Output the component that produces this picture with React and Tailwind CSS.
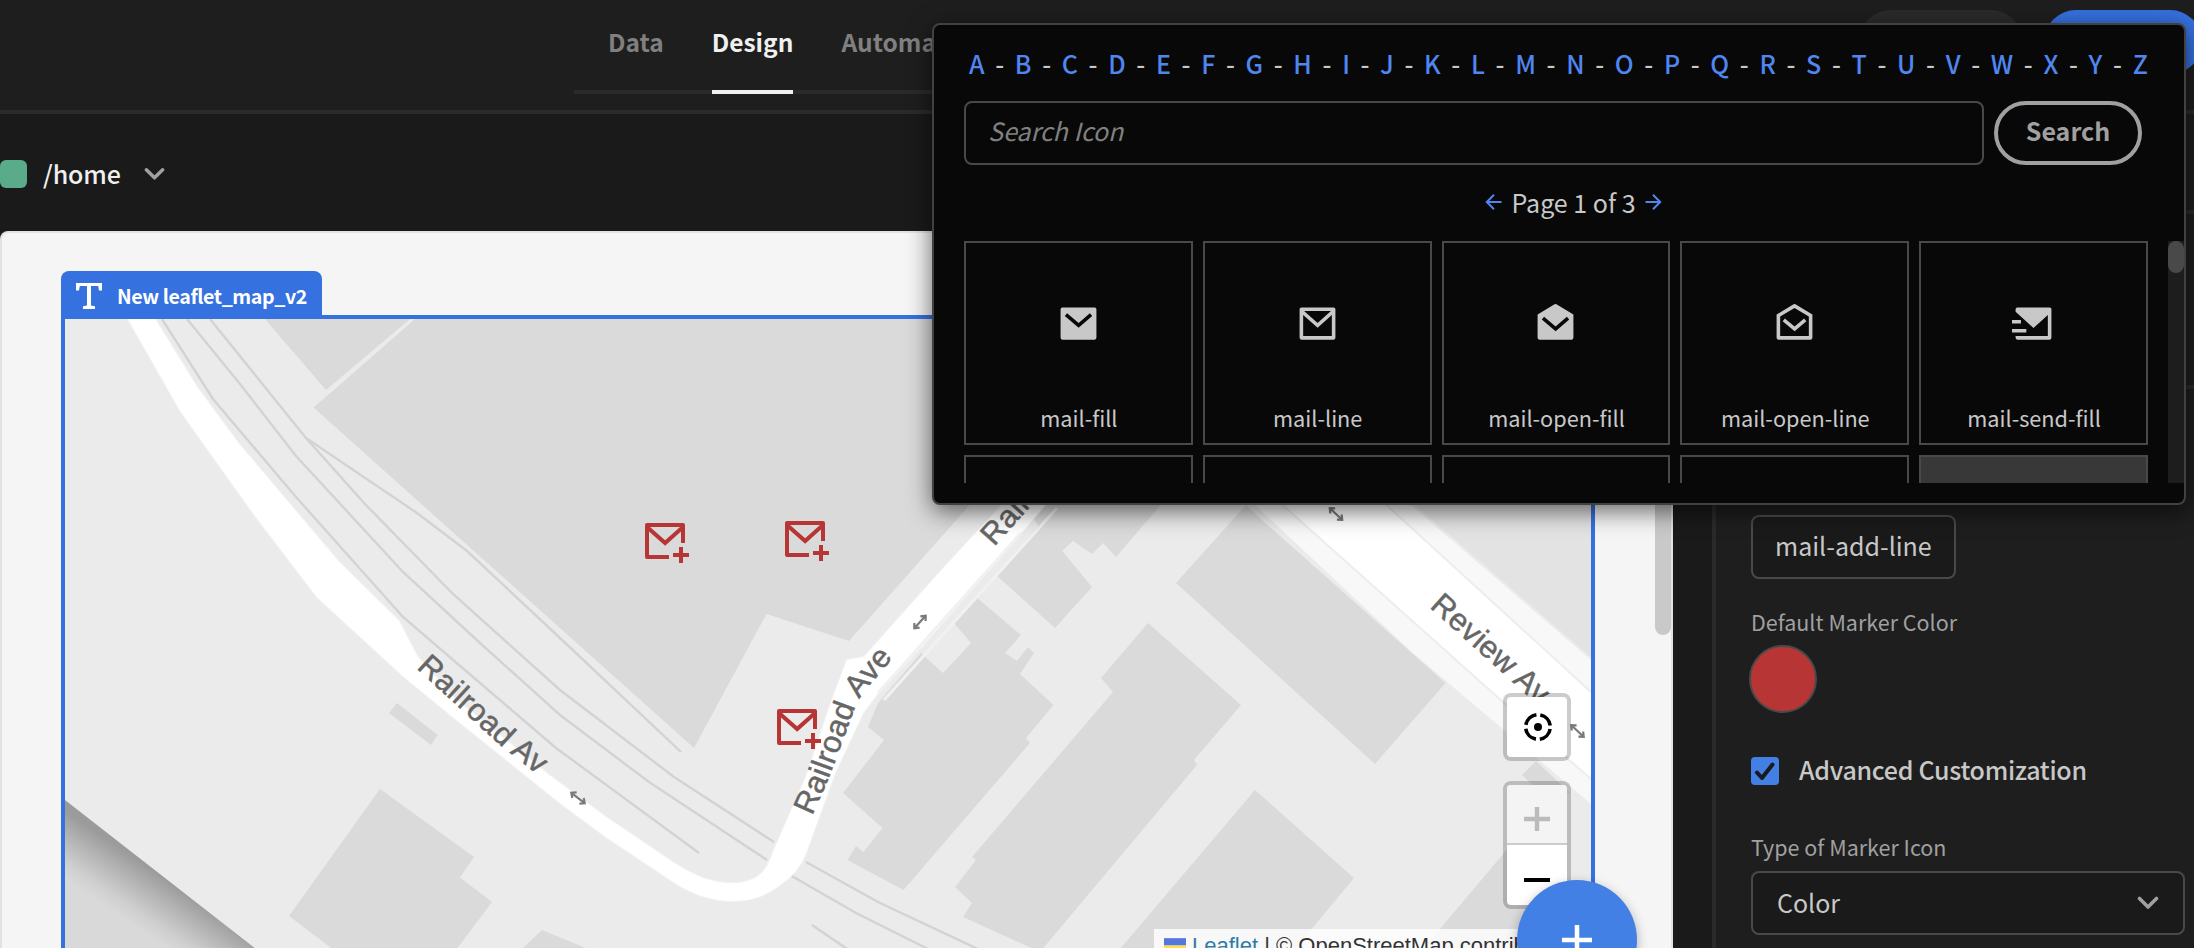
import React from "react";

const LETTERS = "ABCDEFGHIJKLMNOPQRSTUVWXYZ".split("");

const ICON_PATHS = {
  "mail-fill":
    "M3 3h18a1 1 0 0 1 1 1v16a1 1 0 0 1-1 1H3a1 1 0 0 1-1-1V4a1 1 0 0 1 1-1zm9.06 8.683L5.648 6.238 4.353 7.762l7.72 6.555 7.581-6.56-1.308-1.513-6.285 5.439z",
  "mail-line":
    "M3 3h18a1 1 0 0 1 1 1v16a1 1 0 0 1-1 1H3a1 1 0 0 1-1-1V4a1 1 0 0 1 1-1zm17 4.238l-7.928 7.1L4 7.216V19h16V7.238zM4.511 5l7.55 6.662L19.502 5H4.511z",
  "mail-open-fill":
    "M2.243 6.854L11.49 1.31a1 1 0 0 1 1.029 0l9.238 5.545a.5.5 0 0 1 .243.429V20a1 1 0 0 1-1 1H3a1 1 0 0 1-1-1V7.283a.5.5 0 0 1 .243-.429zm16.103 1.39l-6.285 5.439-6.414-5.445-1.294 1.524 7.72 6.555 7.581-6.56-1.308-1.513z",
  "mail-open-line":
    "M2.243 6.854L11.49 1.31a1 1 0 0 1 1.029 0l9.238 5.545a.5.5 0 0 1 .243.429V20a1 1 0 0 1-1 1H3a1 1 0 0 1-1-1V7.283a.5.5 0 0 1 .243-.429zM4 8.133V19h16V8.132l-7.996-4.8L4 8.132zm8.06 5.565l5.296-4.463 1.288 1.53-6.57 5.537-6.71-5.53 1.272-1.544 5.424 4.47z",
  "mail-send-fill":
    "M2 5.5V3.993A1 1 0 0 1 2.992 3h18.016c.548 0 .992.445.992.993v16.014a1 1 0 0 1-.992.993H2.992A.993.993 0 0 1 2 20.007V19h18V7.3l-8 7.2-10-9zM0 10h5v2H0v-2zm0 5h8v2H0v-2z",
  "mail-add-line":
    "M22 13h-2V7.238l-7.928 7.1L4 7.216V19h10v2H3a1 1 0 0 1-1-1V4a1 1 0 0 1 1-1h18a1 1 0 0 1 1 1v9zM4.511 5l7.55 6.662L19.502 5H4.511zM21 15v3h3v2h-3v3h-2v-3h-3v-2h3v-3h2z",
};

const PICKER_ICONS = ["mail-fill", "mail-line", "mail-open-fill", "mail-open-line", "mail-send-fill"];

function RemixIcon({ name, className }) {
  return (
    <svg viewBox="0 0 24 24" fill="currentColor" className={className}>
      <path d={ICON_PATHS[name]} />
    </svg>
  );
}

function Chevron({ className }) {
  return (
    <svg viewBox="0 0 22 14" fill="none" stroke="currentColor" strokeWidth="3.6" strokeLinecap="round" strokeLinejoin="round" className={className}>
      <path d="M2.5 2.5 11 11l8.500-8.500" />
    </svg>
  );
}

function Arrow({ className }) {
  return (
    <svg viewBox="0 0 18 18" fill="none" stroke="currentColor" strokeWidth="2" className={className}>
      <path d="M1.500 9h15M9 1.800 1.800 9 9 16.200" />
    </svg>
  );
}

function RoadArrow({ x, y, angle }) {
  return (
    <path
      transform={`translate(${x} ${y}) rotate(${angle})`}
      d="M-8 0H8M-4.500 -3.500-8.500 0-4.500 3.500M4.500 -3.500 8.500 0 4.500 3.500"
      fill="none"
      stroke="#7a7a7a"
      strokeWidth="2.200"
    />
  );
}

function MapTiles() {
  return (
    <svg viewBox="65 319 1526 629" className="block h-[629px] w-[1526px]">
      <defs>
        <linearGradient id="shore" gradientUnits="userSpaceOnUse" x1="160" y1="875" x2="128" y2="922">
          <stop offset="0" stopColor="#9b9b9b" />
          <stop offset="0.35" stopColor="#b4b4b4" />
          <stop offset="0.75" stopColor="#cfcfcf" />
          <stop offset="1" stopColor="#d9d9d9" />
        </linearGradient>
        <path id="label-a" d="M416 668 L501 746 L580 808" />
        <path id="label-b" d="M812 816 L829 778 L853 713 Q859 697 870 685 L905 643" />
        <path id="label-c" d="M994 547 L1098 431" />
        <path id="label-d" d="M1429 607 L1568 732" />
      </defs>
      <rect x="65" y="319" width="1526" height="629" fill="#ebebeb" />
      <g fill="#dadada">
        <path d="M265 319 326 390 410 319z" />
        <path d="M415 319 335 389 313.500 407.500 694 748 766.500 614 849 641 967 508 1130 319z" />
        <path d="M380 789 474 857 460 877.500 492 902 456 950 334 950 289 916z" />
        <path d="M397 703 437.500 735 431 745 389 713z" />
        <path d="M542 930 588 949 522 949z" />
        <path d="M976 597 1021 635 1005 653 1017 661 1028 647 1034 653 1020 674 1053.500 705 1026 738 1030 743 903.500 890 847.500 860 856 846 863.500 852 882.500 828 843 793 884 740 868 727 878 703 921 653 943 673 971 643 953 622z" />
        <path d="M996 575 1040 524 1092 587 1055 628z" />
        <path d="M1022 500 1165 500 1116 557 1103 543 1092 554 1073 541 1062 551 1046 538z" />
        <path d="M1148 623 1241 705 1194 760 1197 765 1040 952 963 917 972 903 955 887 976 860 972 857 1113 692 1101 678z" />
        <path d="M1246 505 1176 583 1375 764 1445.500 683 1262 520z" />
        <path d="M1255 790 1354 878 1295 949 1120 949z" />
        <path d="M1515 840 1562 880 1502 949 1423 949z" />
        <path d="M1536 761 1522 775 1541 793 1570 793z" />
      </g>
      <path d="M65 800 256 949 65 949z" fill="url(#shore)" />
      <g fill="none" stroke="#d3d3d3" strokeWidth="2.400">
        <path d="M162 319 213 399 296 497 403 617 480 683 556 748 699 853" />
        <path d="M187 319 240 384 296 456 403 572 480 643 560 715 649 782 767 860M790 875 856 913 930 950" />
        <path d="M210 319 306 438 364 503 453 594 560 690 674 777 774 842M806 862 878 902 980 950" />
        <path d="M306 438 417 513 467 551 560 638 681 752" />
        <path d="M812 925 850 951" />
      </g>
      <path
        d="M128 319 181 412 253 513 317 597 403 676 453 717 560 803 606 837 678 885Q705 901 733 901 760 901 780 885 799 872 806 853L835 773 863 713 878 693 921 647 1021 533 1130 405 1090 405 999 508 939 573 864 657 847 660 833 697 806 777 774 850Q767 873 753 879 742 884 731 883 717 883 703 878 690 873 674 863L606 817 549 775 453 697 417 656 399 621 339 562 239 444 197 387 155 319z"
        fill="#fff"
        stroke="#f3f3f3"
        strokeWidth="2"
        paintOrder="stroke"
      />
      <path d="M1021 533 878 693M1057 508 884 700" fill="none" stroke="#f1f1f1" strokeWidth="3" />
      <path d="M1409 500 1591 500 1591 657z" fill="#e3e3e3" />
      <path d="M1250 500 1405 500 1591 660 1591 804 1413 653z" fill="#f8f8f8" />
      <path d="M1277 500 1381 500 1591 692 1591 779 1503 702z" fill="#fff" />
      <g fill="none" stroke="#ededed" strokeWidth="2">
        <path d="M1277 500 1503 702 1591 779" />
        <path d="M1381 500 1591 692" />
      </g>
      <RoadArrow x={578} y={798} angle={38} />
      <RoadArrow x={920} y={622} angle={-48} />
      <RoadArrow x={1336} y={514} angle={43} />
      <RoadArrow x={1577.5} y={731} angle={43} />
      <g fill="#666" stroke="#666" strokeWidth="0.500" fontFamily="Liberation Sans, Arial, sans-serif" fontSize="31" letterSpacing="0.400">
        <text><textPath href="#label-a">Railroad Av</textPath></text>
        <text><textPath href="#label-b">Railroad Ave</textPath></text>
        <text><textPath href="#label-c">Rail</textPath></text>
        <text><textPath href="#label-d">Review Av</textPath></text>
      </g>
    </svg>
  );
}

function MapWidget() {
  return (
    <div className="relative h-[633px] w-[1534px] overflow-hidden border-4 border-b-0 border-[#3671e0]">
      <MapTiles />
      <RemixIcon name="mail-add-line" className="absolute left-[576px] top-[198px] size-12 text-[#b83535]" />
      <RemixIcon name="mail-add-line" className="absolute left-[716px] top-[196px] size-12 text-[#b83535]" />
      <RemixIcon name="mail-add-line" className="absolute left-[708px] top-[384px] size-12 text-[#b83535]" />
      <div className="absolute left-[1438px] top-[374px] flex size-[68px] items-center justify-center rounded-lg border-4 border-black/20 bg-white bg-clip-padding">
        <svg viewBox="0 0 30 30" className="ml-[2px] size-[30px]">
          <circle cx="15" cy="15" r="12.300" fill="none" stroke="#000" strokeWidth="3.600" strokeDasharray="15.320 4" strokeDashoffset="-2" />
          <circle cx="15" cy="15" r="4" />
        </svg>
      </div>
      <div className="absolute left-[1438px] top-[462px] flex h-32 w-[68px] flex-col overflow-hidden rounded-lg border-4 border-black/20 bg-white bg-clip-padding">
        <div className="flex h-[60px] items-center justify-center border-b-2 border-[#ccc] bg-[#f4f4f4] pt-[9px] text-[#bbb]">
          <svg viewBox="0 0 26 26" className="size-[26px]" stroke="currentColor" strokeWidth="4.400"><path d="M0 13h26M13 1v24" /></svg>
        </div>
        <div className="flex h-[60px] items-center justify-center pt-[9px] text-black">
          <svg viewBox="0 0 26 26" className="size-[26px]" stroke="currentColor" strokeWidth="4"><path d="M0 13h26" /></svg>
        </div>
      </div>
      <div className="absolute left-[1089px] top-[610px] flex h-8 w-[437px] items-center whitespace-nowrap bg-white/80 pl-[10px] font-['Liberation_Sans',Arial,sans-serif] text-[22px] text-[#333]">
        <svg viewBox="0 0 12 8" className="mr-[6px] mt-px h-[15px] w-[22px]">
          <path fill="#5577dd" d="M0 0h12v4H0z" />
          <path fill="#ffdd44" d="M0 4h12v4H0z" />
        </svg>
        <span className="text-[#2f7ba8]">Leaflet</span>
        <span className="whitespace-pre"> | © OpenStreetMap contributors</span>
      </div>
    </div>
  );
}

function IconPicker() {
  return (
    <div className="absolute left-[932px] top-[23px] h-[482px] w-[1254px] overflow-hidden rounded-lg border-2 border-[#414141] bg-[#080808] shadow-[0_6px_24px_rgba(0,0,0,0.6)]">
      <div className="flex h-[76px] items-center justify-between pl-[35px] pr-[36px] text-[25px] font-medium leading-none">
        {LETTERS.map((l, i) => (
          <React.Fragment key={l}>
            {i > 0 && <span className="text-[#c8c8c8]">-</span>}
            <span className="text-[#4f86f0]">{l}</span>
          </React.Fragment>
        ))}
      </div>
      <div className="flex gap-[10px] pl-[30px]">
        <div className="flex h-16 w-[1020px] items-center rounded-lg border-2 border-[#494949] pb-[4px] pl-[22px] text-[25px] italic text-[#808080]">Search Icon</div>
        <div className="flex h-16 w-[148px] items-center justify-center rounded-full border-4 border-[#a0a0a0] pb-[4px] text-[25px] font-bold text-[#a0a0a0]">Search</div>
      </div>
      <div className="flex h-[76px] items-center justify-center gap-[8px] pl-[29px] text-[25px] text-[#c8c8c8]">
        <Arrow className="mb-[3px] size-[18px] text-[#4f86f0]" />
        <span>Page 1 of 3</span>
        <Arrow className="mb-[3px] size-[18px] rotate-180 text-[#4f86f0]" />
      </div>
      <div className="flex h-[242px] justify-between overflow-hidden pl-[30px]">
        <div className="grid grid-cols-[repeat(5,228.8px)] content-start gap-[10px]">
          {PICKER_ICONS.map((name) => (
            <div key={name} className="flex h-[204px] flex-col items-center border-2 border-[#494949] pt-[59px] text-[#c8c8c8]">
              <RemixIcon name={name} className="size-[43px]" />
              <span className="mt-[53px] pl-px text-[21.700px] leading-[40px]">{name}</span>
            </div>
          ))}
          {PICKER_ICONS.map((name, i) => (
            <div key={name} className={i === 4 ? "h-[204px] border-2 border-[#494949] bg-[#383838]" : "h-[204px] border-2 border-[#494949]"} />
          ))}
        </div>
        <div className="w-4 bg-[#1d1d1d]">
          <div className="h-8 rounded-full bg-[#494949]" />
        </div>
      </div>
    </div>
  );
}

function SettingsPanel() {
  return (
    <aside className="flex h-[834px] w-[482px] flex-col border-l-4 border-[#2a2a2a] bg-[#1e1e1e] text-[#c8c8c8]">
      <div className="h-[100px] border-b-4 border-[#2a2a2a]" />
      <div className="h-[175px] border-b-4 border-[#2a2a2a]" />
      <div className="flex flex-col items-start pl-[35px] pt-[126px]">
        <div className="flex h-16 w-[205px] items-center rounded-lg border-2 border-[#494949] bg-[#1a1a1a] pb-[3px] pl-[22px] text-[25px]">mail-add-line</div>
        <div className="mt-[23px] flex h-10 items-center text-[21.500px] text-[#a0a0a0]">Default Marker Color</div>
        <div className="-ml-[2px] mt-[3px] size-[68px] rounded-full border-2 border-[#494949] bg-[#b83535]" />
        <div className="mt-[38px] flex h-10 items-center gap-5">
          <div className="flex size-7 items-center justify-center rounded bg-[#4380e5]">
            <svg viewBox="0 0 22 22" className="size-[22px]" fill="none" stroke="#1a1a1a" strokeWidth="4" strokeLinecap="round" strokeLinejoin="round"><path d="M3 12.500 8 18 18.500 4.500" /></svg>
          </div>
          <span className="pb-[2px] text-[25px] font-medium tracking-[-0.3px]">Advanced Customization</span>
        </div>
        <div className="mt-[36px] flex h-10 items-center text-[21.500px] text-[#a0a0a0]">Type of Marker Icon</div>
        <div className="mt-[4px] flex h-16 w-[434px] items-center justify-between rounded-lg border-2 border-[#494949] bg-[#1a1a1a] pl-[24px] pr-[24px] text-[25px]">
          <span>Color</span>
          <Chevron className="h-[14px] w-[22px] text-[#a0a0a0]" />
        </div>
      </div>
    </aside>
  );
}

export default function App() {
  return (
    <div className="relative h-[948px] w-[2194px] overflow-hidden bg-[#1a1a1a] font-['Noto_Sans_CJK_SC',sans-serif]">
      <header className="flex h-[114px] items-start justify-between border-b-4 border-[#2b2b2b] bg-[#1e1e1e] pl-[574px]">
        <nav className="flex h-[94px] w-[800px] gap-[48px] border-b-4 border-[#2b2b2b] pl-[34px] text-[24.500px] font-bold text-[#808080]">
          <span className="pt-[22px] leading-[40px]">Data</span>
          <span className="h-[94px] border-b-4 border-[#f0f0f0] pt-[22px] leading-[40px] text-[#f0f0f0]">Design</span>
          <span className="pt-[22px] leading-[40px]">Automa</span>
        </nav>
        <div className="-mr-2 flex gap-[21px] pt-[10px]">
          <div className="h-16 w-[164px] rounded-full bg-[#2b2b2b]" />
          <div className="h-16 w-[158px] rounded-full bg-[#3671e0]" />
        </div>
      </header>
      <div className="flex h-[834px] justify-between">
        <main className="w-[1673px]">
          <div className="flex h-[117px] items-center">
            <div className="mt-[3px] h-7 w-[27px] rounded-md bg-[#5aab8a]" />
            <span className="ml-4 mt-[2px] text-[25px] font-medium tracking-[-0.1px] text-[#f0f0f0]">/home</span>
            <Chevron className="ml-[23px] mt-[3px] h-[14px] w-[21px] text-[#a0a0a0]" />
          </div>
          <div className="flex h-[717px] justify-between overflow-hidden rounded-t-lg border-x-2 border-t-2 border-[#e2e2e2] bg-[#f5f5f5]">
            <div className="flex flex-col items-start pl-[59px] pt-[38px]">
              <div className="flex h-11 w-[261px] items-center whitespace-nowrap rounded-t-lg bg-[#3671e0] pl-[15px] text-[19.600px] font-bold tracking-[-0.4px] text-white">
                <svg viewBox="0 0 26 26" className="mr-[15px] mt-[5px] size-[26px] shrink-0" fill="currentColor"><path d="M0 0h26v7.500h-3L22.200 3H15v19.500l4 .7V26H7v-2.800l4-.7V3H3.800L3 7.500H0z" /></svg>
                <span className="pt-[5px]">New leaflet_map_v2</span>
              </div>
              <MapWidget />
            </div>
            <div className="h-[402px] w-4 rounded-b-full bg-[#c9c9c9]" />
          </div>
        </main>
        <SettingsPanel />
      </div>
      <div className="absolute left-[1517px] top-[880px] flex size-[120px] items-center justify-center rounded-full bg-[#4380e5] text-white shadow-[0_4px_12px_rgba(0,0,0,0.3)]">
        <svg viewBox="0 0 30 30" className="size-[30px]" stroke="currentColor" strokeWidth="4.500"><path d="M0 15h30M15 0v30" /></svg>
      </div>
      <IconPicker />
    </div>
  );
}
